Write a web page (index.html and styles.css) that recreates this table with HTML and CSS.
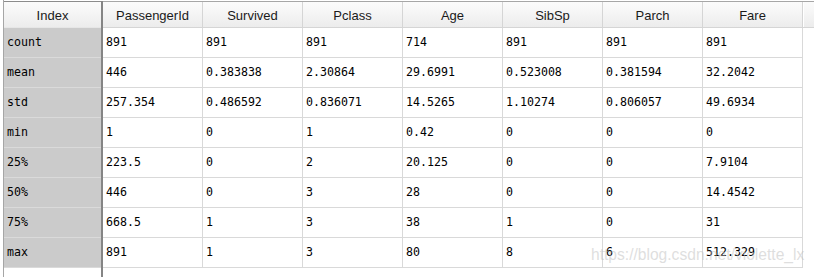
FILE: index.html
```html
<!DOCTYPE html>
<html>
<head>
<meta charset="utf-8">
<link rel="stylesheet" href="styles.css">
</head>
<body>
<div class="view">
  <div class="index-col">
    <div class="ihead">Index</div>
    <div class="icell">count</div>
    <div class="icell">mean</div>
    <div class="icell">std</div>
    <div class="icell">min</div>
    <div class="icell">25%</div>
    <div class="icell">50%</div>
    <div class="icell">75%</div>
    <div class="icell">max</div>
  </div>
  <div class="data">
    <div class="hrow">
      <div class="hcell">PassengerId</div>
      <div class="hcell">Survived</div>
      <div class="hcell">Pclass</div>
      <div class="hcell">Age</div>
      <div class="hcell">SibSp</div>
      <div class="hcell">Parch</div>
      <div class="hcell">Fare</div>
      <div class="hfill"></div>
    </div>
    <div class="row"><div class="cell">891</div><div class="cell">891</div><div class="cell">891</div><div class="cell">714</div><div class="cell">891</div><div class="cell">891</div><div class="cell">891</div></div>
    <div class="row"><div class="cell">446</div><div class="cell">0.383838</div><div class="cell">2.30864</div><div class="cell">29.6991</div><div class="cell">0.523008</div><div class="cell">0.381594</div><div class="cell">32.2042</div></div>
    <div class="row"><div class="cell">257.354</div><div class="cell">0.486592</div><div class="cell">0.836071</div><div class="cell">14.5265</div><div class="cell">1.10274</div><div class="cell">0.806057</div><div class="cell">49.6934</div></div>
    <div class="row"><div class="cell">1</div><div class="cell">0</div><div class="cell">1</div><div class="cell">0.42</div><div class="cell">0</div><div class="cell">0</div><div class="cell">0</div></div>
    <div class="row"><div class="cell">223.5</div><div class="cell">0</div><div class="cell">2</div><div class="cell">20.125</div><div class="cell">0</div><div class="cell">0</div><div class="cell">7.9104</div></div>
    <div class="row"><div class="cell">446</div><div class="cell">0</div><div class="cell">3</div><div class="cell">28</div><div class="cell">0</div><div class="cell">0</div><div class="cell">14.4542</div></div>
    <div class="row"><div class="cell">668.5</div><div class="cell">1</div><div class="cell">3</div><div class="cell">38</div><div class="cell">1</div><div class="cell">0</div><div class="cell">31</div></div>
    <div class="row"><div class="cell">891</div><div class="cell">1</div><div class="cell">3</div><div class="cell">80</div><div class="cell">8</div><div class="cell">6</div><div class="cell">512.329</div></div>
  </div>
  <div class="watermark">https://blog.csdn.net/violette_lx</div>
</div>
</body>
</html>
```
FILE: styles.css
```css
html, body {
  margin: 0;
  background: #ffffff;
}
.view {
  position: relative;
  display: flex;
  height: 277px;
  margin-left: 3px;
  padding-top: 1px;
  box-sizing: border-box;
  border-left: 1px solid #a6a6a6;
  overflow: hidden;
}
.index-col {
  flex: none;
  width: 97px;
  border-right: 2px solid #858585;
}
.ihead {
  height: 25px;
  border-top: 1px solid #8c8c8c;
  border-bottom: 1px solid #e6e6e6;
  background: linear-gradient(#fbfbfb, #f4f4f4 50%, #ececec);
  font: 13px "Liberation Sans", Arial, sans-serif;
  color: #1a1a1a;
  text-align: center;
  line-height: 27px;
}
.icell {
  height: 29px;
  border-bottom: 1px solid #dadada;
  background: #cbcbcb;
  padding-left: 3px;
  font: 11.6px "DejaVu Sans Mono", monospace;
  line-height: 29px;
  color: #000;
}
.data {
  flex: none;
  display: flex;
  flex-direction: column;
  width: 711px;
}
.hrow {
  display: flex;
  height: 25px;
  border-top: 1px solid #a6a6a6;
  border-bottom: 1px solid #d5d5d5;
  background: linear-gradient(#fbfbfb, #f4f4f4 50%, #ececec);
}
.hcell {
  flex: none;
  width: 100px;
  box-sizing: border-box;
  border-right: 1px solid #d5d5d5;
  font: 13px "Liberation Sans", Arial, sans-serif;
  color: #1a1a1a;
  text-align: center;
  line-height: 27px;
}
.hfill {
  flex: 1;
  border-left: 1px solid #ffffff;
}
.row {
  display: flex;
  width: 700px;
  height: 29px;
  border-bottom: 1px solid #d9d9d9;
}
.cell {
  flex: none;
  width: 100px;
  box-sizing: border-box;
  border-right: 1px solid #d9d9d9;
  padding-left: 3px;
  font: 11.6px "DejaVu Sans Mono", monospace;
  line-height: 29px;
  color: #000;
  white-space: nowrap;
}
.watermark {
  position: absolute;
  left: 587px;
  top: 246px;
  font: 15.6px "Liberation Sans", Arial, sans-serif;
  color: rgba(190, 190, 190, 0.5);
  white-space: nowrap;
  pointer-events: none;
}
```
